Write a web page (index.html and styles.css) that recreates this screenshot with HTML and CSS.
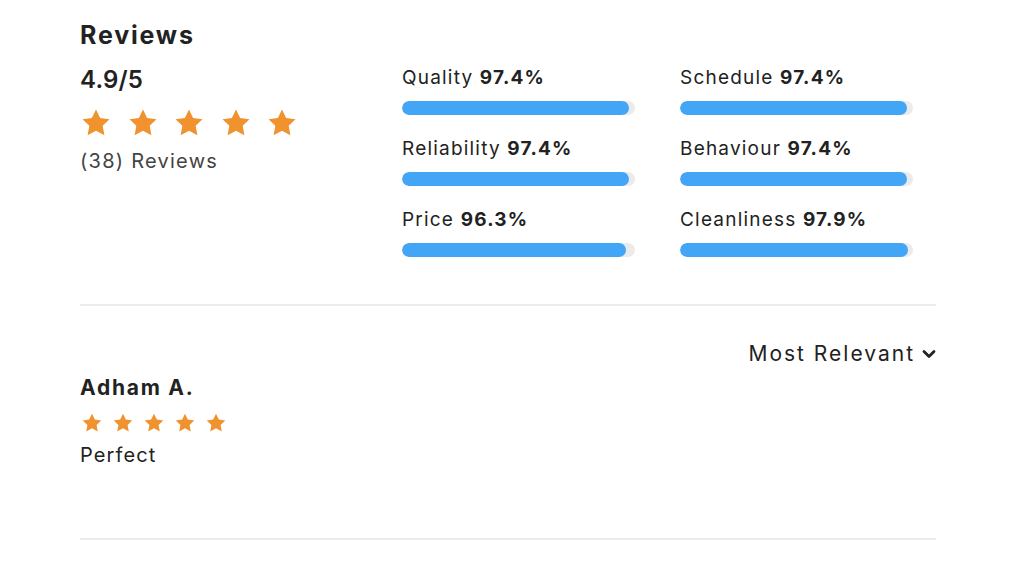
FILE: index.html
```html
<!DOCTYPE html>
<html lang="en">
<head>
<meta charset="utf-8">
<title>Reviews</title>
<link rel="stylesheet" href="styles.css">
</head>
<body>
<svg width="0" height="0" class="defs">
  <defs>
    <symbol id="star" viewBox="0 0 24 24">
      <path d="M12 1.8l3.1 6.5 7 .9-5.1 4.9 1.3 7.1L12 17.8l-6.3 3.4 1.3-7.1L1.9 9.2l7-.9z" stroke-linejoin="round"/>
    </symbol>
  </defs>
</svg>
<main class="page">
  <h1 class="title">Reviews</h1>
  <section class="summary">
    <div class="overall">
      <div class="score">4.9/5</div>
      <div class="stars stars-lg">
        <svg><use href="#star"/></svg><svg><use href="#star"/></svg><svg><use href="#star"/></svg><svg><use href="#star"/></svg><svg><use href="#star"/></svg>
      </div>
      <div class="count">(38) Reviews</div>
    </div>
    <div class="metrics">
      <div class="metric">
        <div class="label">Quality <b>97.4%</b></div>
        <div class="track"><div class="fill" style="width:97.4%"></div></div>
      </div>
      <div class="metric">
        <div class="label">Schedule <b>97.4%</b></div>
        <div class="track"><div class="fill" style="width:97.4%"></div></div>
      </div>
      <div class="metric">
        <div class="label">Reliability <b>97.4%</b></div>
        <div class="track"><div class="fill" style="width:97.4%"></div></div>
      </div>
      <div class="metric">
        <div class="label">Behaviour <b>97.4%</b></div>
        <div class="track"><div class="fill" style="width:97.4%"></div></div>
      </div>
      <div class="metric">
        <div class="label">Price <b>96.3%</b></div>
        <div class="track"><div class="fill" style="width:96.3%"></div></div>
      </div>
      <div class="metric">
        <div class="label">Cleanliness <b>97.9%</b></div>
        <div class="track"><div class="fill" style="width:97.9%"></div></div>
      </div>
    </div>
  </section>
  <hr class="divider">
  <div class="sort">
    <span>Most Relevant</span>
    <svg class="chev" viewBox="0 0 14 10"><path d="M2 2.5l5 5 5-5" fill="none" stroke="currentColor" stroke-width="2.8" stroke-linecap="round" stroke-linejoin="round"/></svg>
  </div>
  <article class="review">
    <div class="author">Adham A.</div>
    <div class="stars stars-sm">
      <svg><use href="#star"/></svg><svg><use href="#star"/></svg><svg><use href="#star"/></svg><svg><use href="#star"/></svg><svg><use href="#star"/></svg>
    </div>
    <div class="text">Perfect</div>
  </article>
  <hr class="divider divider-bottom">
</main>
</body>
</html>
```
FILE: styles.css
```css
html, body {
  margin: 0;
  padding: 0;
  background: #ffffff;
}
body {
  font-family: "Inter", "Open Sans", sans-serif;
  color: #222222;
}
.defs {
  position: absolute;
  width: 0;
  height: 0;
}
.page {
  padding: 20px 88px 0 80px;
}
.title {
  margin: 0;
  font-size: 25px;
  line-height: 30px;
  font-weight: 700;
  letter-spacing: 1.8px;
  color: #222;
}
.summary {
  display: flex;
  margin-top: 15px;
}
.overall {
  width: 322px;
  flex: none;
}
.score {
  font-size: 24px;
  line-height: 30px;
  font-weight: 600;
  letter-spacing: 0.2px;
  color: #222;
}
.stars {
  display: flex;
  fill: #f0922e;
}
.stars-lg {
  margin-top: 12px;
  gap: 14.5px;
}
.stars-lg svg {
  width: 32px;
  height: 32px;
}
.count {
  margin-top: 9px;
  font-size: 20px;
  line-height: 26px;
  letter-spacing: 1.25px;
  color: #444;
}
.metrics {
  display: grid;
  grid-template-columns: 233px 233px;
  column-gap: 45px;
  row-gap: 21px;
}
.label {
  font-size: 19px;
  line-height: 24px;
  letter-spacing: 1.2px;
  color: #222;
  padding-top: 1px;
  margin-bottom: -1px;
}
.label b {
  font-weight: 700;
}
.track {
  margin-top: 12px;
  height: 14px;
  border-radius: 7px;
  background: #ebebeb;
  overflow: hidden;
}
.fill {
  height: 100%;
  border-radius: 7px;
  background: #42a5f5;
}
.divider {
  margin: 47px 0 0;
  border: 0;
  border-top: 2px solid #ececec;
}
.sort {
  display: flex;
  justify-content: flex-end;
  align-items: center;
  gap: 7px;
  margin-top: 34px;
  font-size: 21px;
  line-height: 28px;
  letter-spacing: 2px;
  color: #222;
}
.chev {
  width: 14px;
  height: 10px;
}
.review {
  margin-top: 6px;
}
.author {
  font-size: 21px;
  line-height: 28px;
  font-weight: 700;
  letter-spacing: 1.75px;
}
.stars-sm {
  margin-top: 10px;
  padding-left: 1px;
  gap: 9px;
}
.stars-sm svg {
  width: 22px;
  height: 22px;
}
.text {
  margin-top: 8px;
  font-size: 20px;
  line-height: 26px;
  letter-spacing: 1.1px;
  color: #222;
}
.divider-bottom {
  margin-top: 70px;
}
```
